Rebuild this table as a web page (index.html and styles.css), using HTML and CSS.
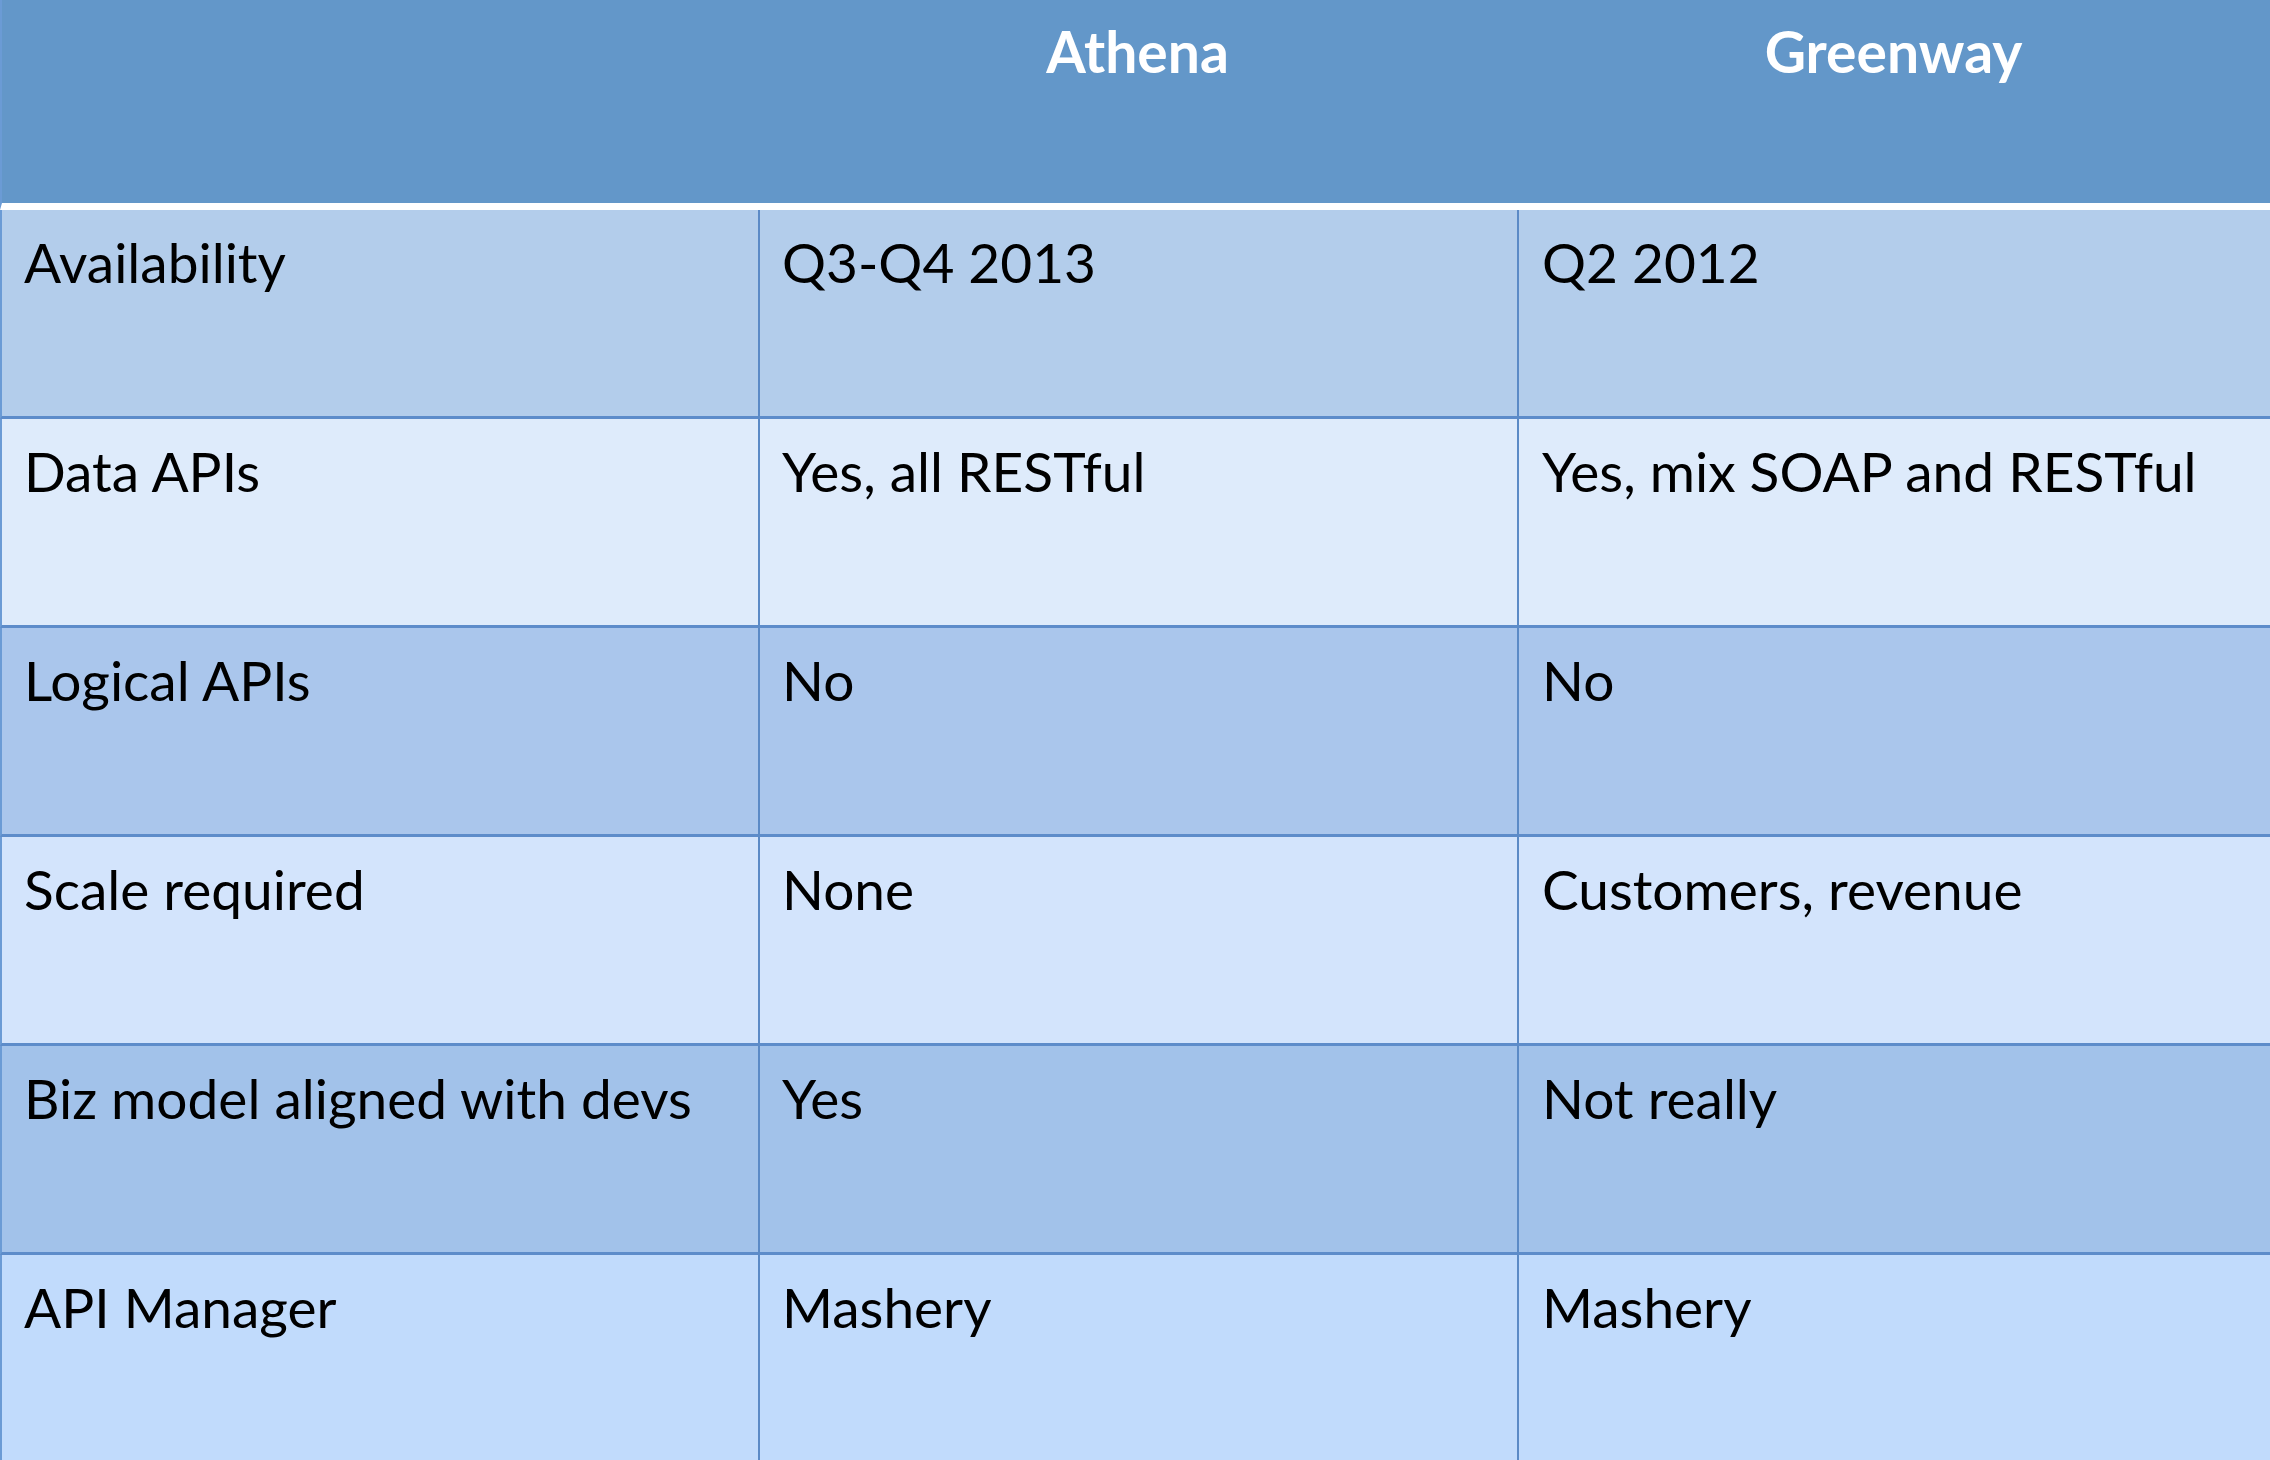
FILE: index.html
```html
<!DOCTYPE html>
<html>
<head>
<meta charset="utf-8">
<link rel="stylesheet" href="styles.css">
</head>
<body>
<table class="cmp">
  <colgroup>
    <col class="c1"><col class="c2"><col class="c3">
  </colgroup>
  <thead>
    <tr class="head">
      <th></th>
      <th>Athena</th>
      <th>Greenway</th>
    </tr>
  </thead>
  <tbody>
    <tr class="r1"><td>Availability</td><td>Q3-Q4 2013</td><td>Q2 2012</td></tr>
    <tr class="r2"><td>Data APIs</td><td>Yes, all RESTful</td><td>Yes, mix SOAP and RESTful</td></tr>
    <tr class="r3"><td>Logical APIs</td><td>No</td><td>No</td></tr>
    <tr class="r4"><td>Scale required</td><td>None</td><td>Customers, revenue</td></tr>
    <tr class="r5"><td>Biz model aligned with devs</td><td>Yes</td><td>Not really</td></tr>
    <tr class="r6"><td>API Manager</td><td>Mashery</td><td>Mashery</td></tr>
  </tbody>
</table>
</body>
</html>
```
FILE: styles.css
```css
html, body {
  margin: 0;
  padding: 0;
  background: #c1dbfc;
  overflow: hidden;
}
.cmp {
  width: 2270px;
  table-layout: fixed;
  border-collapse: separate;
  border-spacing: 0;
  font-family: Lato, "Open Sans", sans-serif;
  font-size: 55px;
  line-height: 1.2;
  color: #000;
}
.c1 { width: 758px; }
.c2 { width: 759px; }
.c3 { width: 753px; }

.head th {
  height: 210px;
  box-sizing: border-box;
  background: #6397c9;
  color: #fff;
  font-weight: bold;
  font-size: 57px;
  text-align: center;
  vertical-align: top;
  padding: 17px 0 0 0;
  border-bottom: 7px solid #fff;
}
.head th:first-child {
  border-left: 2px solid #6b9bd5;
}
tbody td {
  height: 209px;
  box-sizing: border-box;
  vertical-align: top;
  padding: 19px 20px 0 24px;
  border-bottom: 3px solid #5d8cca;
  white-space: nowrap;
}
tbody td:first-child {
  border-left: 2px solid #6b9bd5;
  padding-left: 22px;
}
tbody td + td {
  border-left: 2px solid #5b8ac6;
}
tbody td:nth-child(2) { padding-left: 22px; }
tbody td:nth-child(3) { padding-left: 23px; }

.r1 td { background: #b3cdeb; }
.r2 td { background: #deebfb; }
.r3 td { background: #aac6ec; }
.r4 td { background: #d3e4fc; }
.r5 td { background: #a2c2ea; }
.r6 td { background: #c1dbfc; }
```
